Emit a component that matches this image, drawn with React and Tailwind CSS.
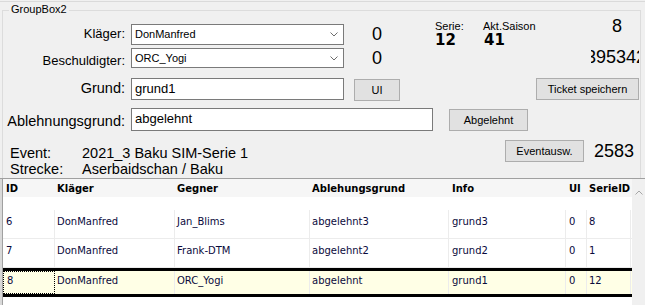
import React from 'react'

const sans = "font-['Liberation_Sans',Arial,sans-serif]"
const dv = "font-['DejaVu_Sans',Verdana,sans-serif]"

const rows = [
  { id: 6, klaeger: 'DonManfred', gegner: 'Jan_Blims', abl: 'abgelehnt3', info: 'grund3', ui: 0, serie: 8 },
  { id: 7, klaeger: 'DonManfred', gegner: 'Frank-DTM', abl: 'abgelehnt2', info: 'grund2', ui: 0, serie: 1 },
  { id: 8, klaeger: 'DonManfred', gegner: 'ORC_Yogi', abl: 'abgelehnt', info: 'grund1', ui: 0, serie: 12, selected: true },
]

// column widths include the 1px separator on the right
const cols = [
  { key: 'id', title: 'ID', w: 'w-[52px] pl-[3px]' },
  { key: 'klaeger', title: 'Kläger', w: 'w-[120px] pl-[2px]' },
  { key: 'gegner', title: 'Gegner', w: 'w-[135px] pl-[2px]' },
  { key: 'abl', title: 'Ablehungsgrund', w: 'w-[139px] pl-[2px]' },
  { key: 'info', title: 'Info', w: 'w-[117px] pl-[3px]' },
  { key: 'ui', title: 'UI', w: 'w-[21px] pl-[3px]' },
  { key: 'serie', title: 'SerieID', w: 'w-[44px] pl-[2px]' },
]

function Chevron() {
  return (
    <svg width="8" height="5" viewBox="0 0 8 5">
      <path d="M0.5 0.5 L4 4 L7.5 0.5" fill="none" stroke="#6d6d6d" strokeWidth="1" />
    </svg>
  )
}

function Combo({ value, cls }) {
  return (
    <div className={`ml-[6px] w-[213px] bg-white border border-[#7a7a7a] flex items-center pl-[3px] pr-[5px] text-[11px] ${cls}`}>
      <span className="flex-1">{value}</span>
      <Chevron />
    </div>
  )
}

function Btn({ children, cls }) {
  return (
    <div className={`h-[22px] bg-[#e1e1e1] border border-[#adadad] flex items-center justify-center text-[11px] text-black ${cls}`}>
      {children}
    </div>
  )
}

export default function App() {
  return (
    <div className={`w-[645px] h-[305px] overflow-hidden bg-[#f0f0f0] text-black ${sans}`}>
      <div className="mt-[1px] h-px bg-[#dadada]" />

      {/* GroupBox2 */}
      <div className="relative mt-[8px] ml-[2px] w-[639px] h-[168px] border-t border-x border-[#dcdcdc]">
        <span className="absolute left-[6px] top-[-8px] px-[2px] bg-[#f0f0f0] text-[11px] leading-[13px]">GroupBox2</span>

        {/* Kläger */}
        <div className="flex items-start h-[35px]">
          <div className="w-[122px] mt-[15px] text-right text-[13px] leading-[16px]">Kläger:</div>
          <Combo value="DonManfred" cls="h-[21px] mt-[13px]" />
          <div className="ml-[28px] w-[40px] mt-[13px] text-[18px] leading-[21px]">0</div>
          <div className="ml-[23px] w-[48px] mt-[9px]">
            <div className="text-[11px] leading-[13px]">Serie:</div>
            <div className={`${dv} font-bold text-[15px] leading-[15px]`}>12</div>
          </div>
          <div className="w-[100px] mt-[9px]">
            <div className="text-[11px] leading-[13px]">Akt.Saison</div>
            <div className={`${dv} font-bold text-[15px] leading-[15px] pl-[1px]`}>41</div>
          </div>
          <div className="ml-[29px] mt-[5px] text-[18px] leading-[21px]">8</div>
        </div>

        {/* Beschuldigter */}
        <div className="flex items-start h-[24px]">
          <div className="w-[122px] mt-[7px] text-right text-[13px] leading-[16px]">Beschuldigter:</div>
          <Combo value="ORC_Yogi" cls="h-[20px] mt-[2px]" />
          <div className="ml-[28px] w-[40px] mt-[2px] text-[18px] leading-[21px]">0</div>
          <div className="ml-[179px] w-[48px] overflow-hidden mt-[1px]">
            <div className="ml-[-5px] text-[18px] leading-[21px] whitespace-nowrap">395342</div>
          </div>
        </div>

        {/* Grund */}
        <div className="flex items-start h-[33px]">
          <div className="w-[122px] mt-[9px] text-right text-[14.5px] leading-[18px]">Grund:</div>
          <div className="ml-[6px] w-[213px] h-[22px] mt-[8px] bg-white border border-[#7a7a7a] pl-[3px] text-[13px] leading-[20px]">grund1</div>
          <Btn cls="ml-[10px] w-[46px] mt-[9px]">UI</Btn>
          <Btn cls="ml-[136px] w-[103px] mt-[8px]">Ticket speichern</Btn>
        </div>

        {/* Ablehnungsgrund */}
        <div className="flex items-start h-[31px]">
          <div className="w-[122px] mt-[9px] text-right text-[14.5px] leading-[18px]">Ablehnungsgrund:</div>
          <div className="ml-[6px] w-[302px] h-[23px] mt-[5px] bg-white border border-[#7a7a7a] pl-[3px] text-[13px] leading-[19px]">abgelehnt</div>
          <Btn cls="ml-[16px] w-[79px] mt-[6px]">Abgelehnt</Btn>
        </div>

        {/* Event */}
        <div className="flex items-start">
          <div className="ml-[7px] w-[495px] mt-[11px] text-[14.5px] leading-[16px]">
            <div className="flex"><span className="w-[72px]">Event:</span><span>2021_3 Baku SIM-Serie 1</span></div>
            <div className="flex"><span className="w-[72px]">Strecke:</span><span>Aserbaidschan / Baku</span></div>
          </div>
          <Btn cls="w-[79px] mt-[6px]">Eventausw.</Btn>
          <div className="ml-[10px] mt-[7px] text-[18px] leading-[21px]">2583</div>
        </div>
      </div>

      {/* table */}
      <div className="flex h-[127px] border-t border-[#a0a0a0]">
        <div className="w-[3px] bg-[#d9d9d9] border-r border-[#a0a0a0]" />
        <div className={`w-[629px] bg-white overflow-hidden ${dv} text-[10px] text-[#0a0a3c]`}>
          <div className="flex items-center h-[18px] bg-[#f6f6f6] font-bold text-black">
            {cols.map(c => (
              <div key={c.key} className={`${c.w} shrink-0 whitespace-nowrap overflow-hidden`}>{c.title}</div>
            ))}
          </div>
          <div className="h-[13px]" />
          {rows.map(r => (
            <div
              key={r.id}
              className={r.selected
                ? 'flex h-[29px] bg-[#ffffe6] border-y-[3px] border-black'
                : 'flex h-[29px] border-b border-[#ececec]'}
            >
              {cols.map((c, i) => (
                <div
                  key={c.key}
                  className={`${c.w} shrink-0 flex items-center pb-[5px] whitespace-nowrap overflow-hidden border-r border-[#ececec] ${r.selected && i === 0 ? 'border-dotted border border-black' : ''}`}
                >
                  {r[c.key]}
                </div>
              ))}
            </div>
          ))}
        </div>
        <div className="flex-1 bg-[#f0f0f0] flex justify-center pt-[11px]">
          <svg width="8" height="5" viewBox="0 0 8 5">
            <path d="M0.5 4.5 L4 1 L7.5 4.5" fill="none" stroke="#a6a6a6" strokeWidth="1" />
          </svg>
        </div>
      </div>
    </div>
  )
}
